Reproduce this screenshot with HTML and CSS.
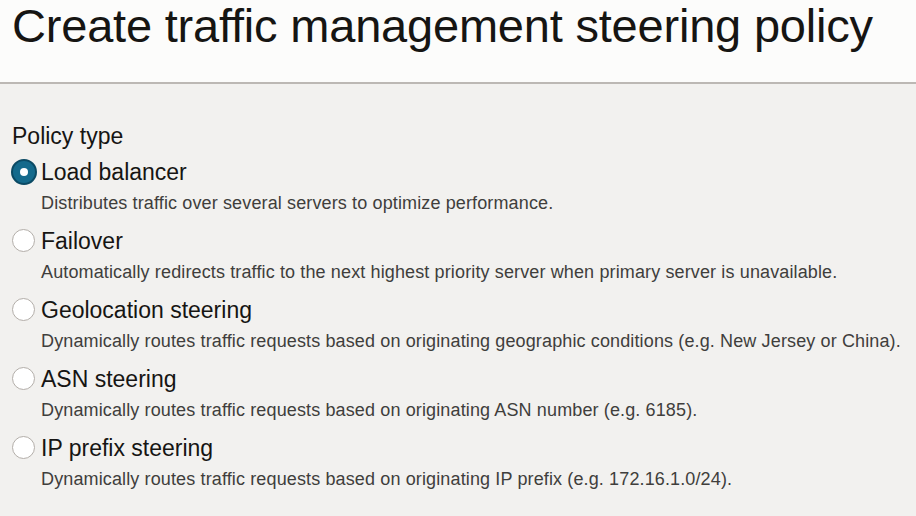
FILE: index.html
```html
<!DOCTYPE html>
<html>
<head>
<meta charset="utf-8">
<link rel="stylesheet" href="styles.css">
</head>
<body>
<header class="header">
  <h1 class="title">Create traffic management steering policy</h1>
</header>
<main class="content">
  <div class="group-label">Policy type</div>
  <div class="options">
    <div class="option">
      <span class="radio checked"></span>
      <div class="option-text">
        <div class="option-label">Load balancer</div>
        <div class="option-desc">Distributes traffic over several servers to optimize performance.</div>
      </div>
    </div>
    <div class="option">
      <span class="radio"></span>
      <div class="option-text">
        <div class="option-label">Failover</div>
        <div class="option-desc">Automatically redirects traffic to the next highest priority server when primary server is unavailable.</div>
      </div>
    </div>
    <div class="option">
      <span class="radio"></span>
      <div class="option-text">
        <div class="option-label">Geolocation steering</div>
        <div class="option-desc">Dynamically routes traffic requests based on originating geographic conditions (e.g. New Jersey or China).</div>
      </div>
    </div>
    <div class="option">
      <span class="radio"></span>
      <div class="option-text">
        <div class="option-label">ASN steering</div>
        <div class="option-desc">Dynamically routes traffic requests based on originating ASN number (e.g. 6185).</div>
      </div>
    </div>
    <div class="option">
      <span class="radio"></span>
      <div class="option-text">
        <div class="option-label">IP prefix steering</div>
        <div class="option-desc">Dynamically routes traffic requests based on originating IP prefix (e.g. 172.16.1.0/24).</div>
      </div>
    </div>
  </div>
</main>
</body>
</html>
```
FILE: styles.css
```css
html, body {
  margin: 0;
  padding: 0;
}
body {
  width: 916px;
  height: 516px;
  overflow: hidden;
  background: #f2f1ef;
  font-family: "Liberation Sans", Arial, sans-serif;
  color: #161513;
}
.header {
  background: #fcfcfb;
  border-bottom: 2px solid #bcb8b4;
  box-sizing: border-box;
  padding: 0 0 0 12px;
  height: 84px;
}
.title {
  margin: 0;
  font-weight: normal;
  font-size: 47px;
  line-height: 52px;
  letter-spacing: -0.2px;
  white-space: nowrap;
}
.content {
  padding: 40px 0 0 12px;
}
.group-label {
  font-size: 23px;
  line-height: 24px;
  color: #161513;
}
.options {
  display: flex;
  flex-direction: column;
  gap: 14px;
  margin-top: 11px;
}
.option {
  display: flex;
  align-items: flex-start;
}
.radio {
  width: 23px;
  height: 23px;
  box-sizing: border-box;
  border-radius: 50%;
  border: 1.5px solid #b3aea9;
  background: #ffffff;
  margin-top: 1px;
  margin-right: 6px;
  flex: none;
  position: relative;
}
.radio.checked {
  width: 26px;
  height: 26px;
  margin-left: -1.5px;
  margin-top: 0px;
  margin-right: 4.5px;
  border: 2px solid #0b4a64;
  background: #146a8c;
}
.radio.checked::after {
  content: "";
  position: absolute;
  left: 50%;
  top: 50%;
  width: 8px;
  height: 8px;
  margin: -4px 0 0 -4px;
  border-radius: 50%;
  background: #ffffff;
}
.option-label {
  font-size: 23px;
  line-height: 26px;
  color: #161513;
}
.option-desc {
  font-size: 18px;
  line-height: 22px;
  margin-top: 7px;
  letter-spacing: 0.13px;
  color: #403e3c;
  white-space: nowrap;
}
```
